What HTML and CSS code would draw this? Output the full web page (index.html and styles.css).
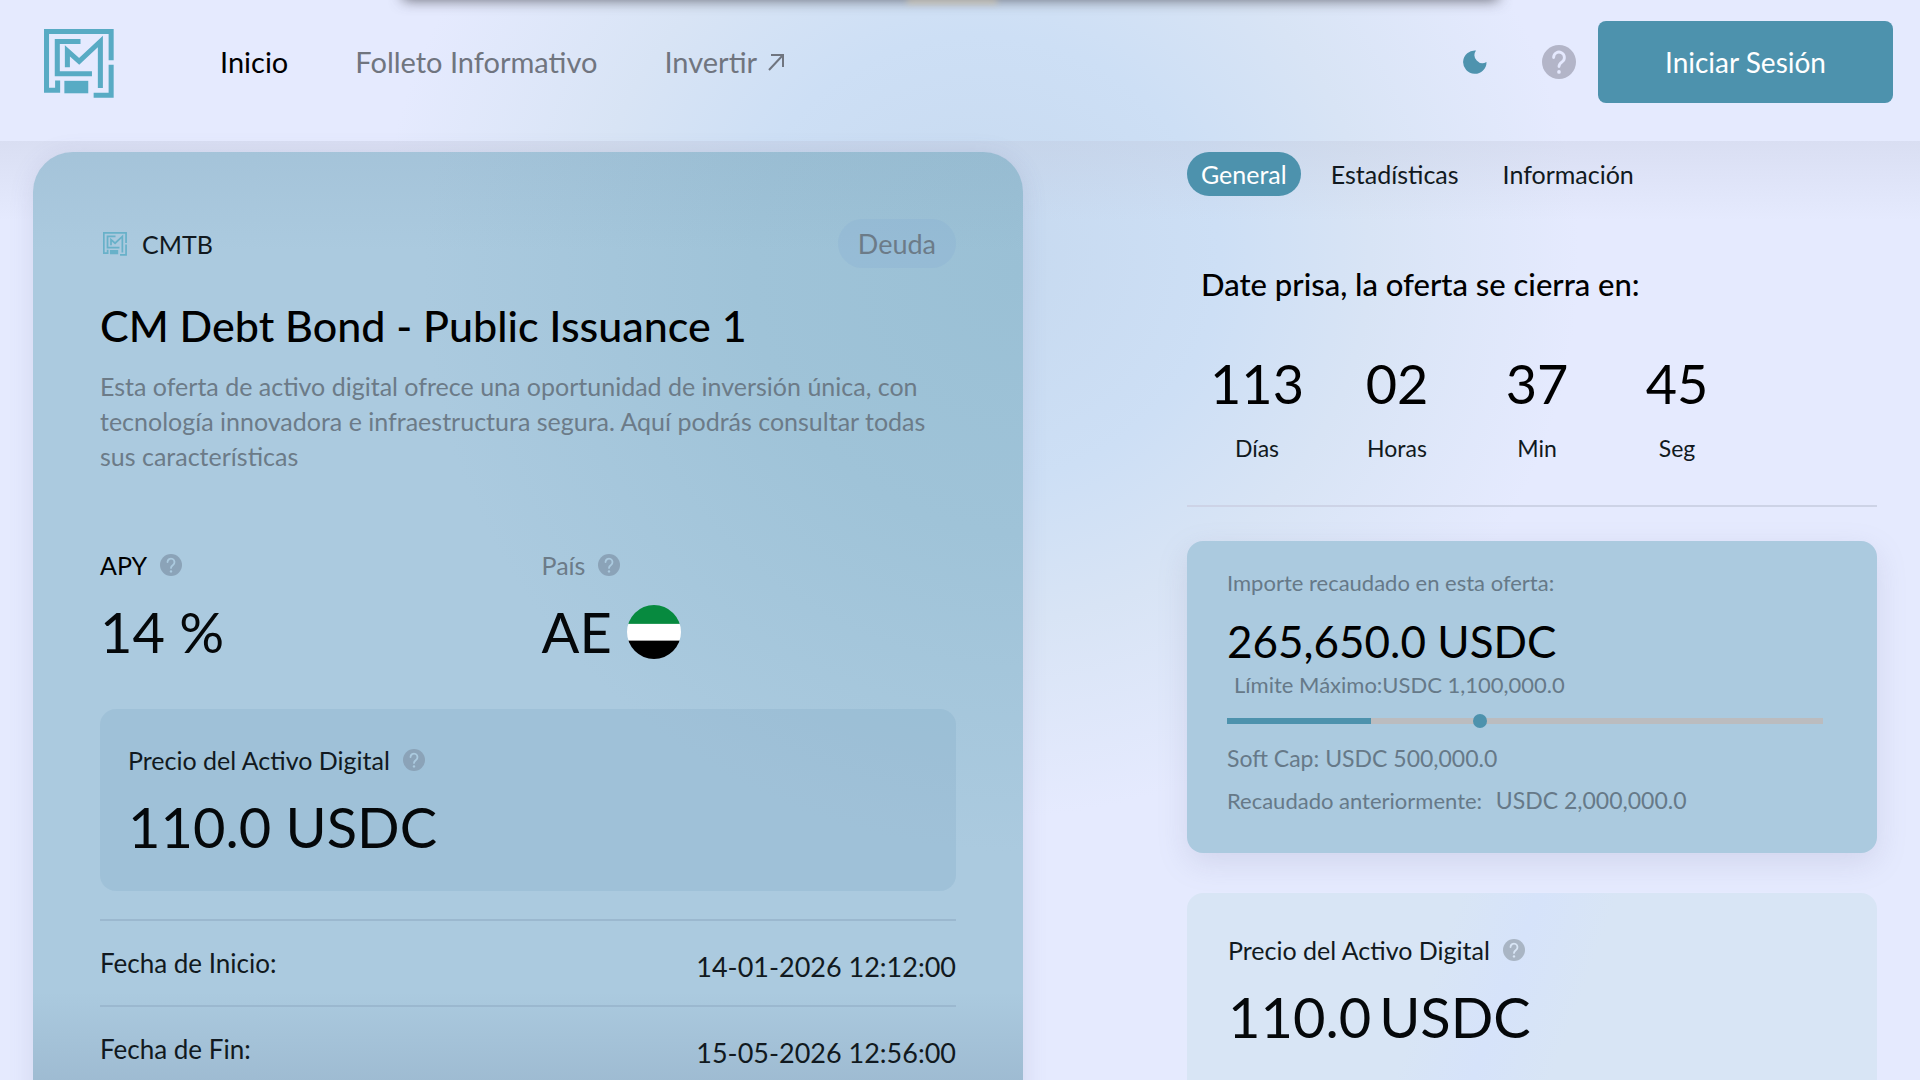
FILE: index.html
```html
<!DOCTYPE html>
<html lang="es">
<head>
  <meta charset="UTF-8" />
  <meta name="viewport" content="width=device-width, initial-scale=1.0"/>
  <title>CM Debt Bond - Public Issuance 1</title>
  <link rel="stylesheet" href="styles.css">
</head>
<body>

  <!-- Iconos compartidos -->
  <svg class="sprite" aria-hidden="true">
    <symbol id="logo" viewBox="44 43 207 205">
      <g fill="none" stroke="currentColor" stroke-width="15">
        <path d="M243 136V50H51v175h33v-29"/>
        <path d="M152 80H83v96h103"/>
        <path d="M113 157v-49l35 31 63-59v138"/>
        <path d="M243 149v91h-52"/>
      </g>
      <path fill="currentColor" d="M104 197h71v37h-71z"/>
    </symbol>
    <symbol id="help" viewBox="0 0 24 24">
      <circle cx="12" cy="12" r="12" fill="currentColor"/>
      <path class="help-mark" d="M8.200 8.800a3.800 3.800 0 1 1 6 3.100c-1.400 1-2.200 1.600-2.200 3.300"/>
      <circle class="help-dot" cx="12" cy="19" r="1.300"/>
    </symbol>
  </svg>

  <div class="top-shadow"></div>

  <header class="navbar">
    <a class="logo" href="#" aria-label="CM"><svg><use href="#logo"/></svg></a>
    <nav class="menu">
      <a href="#" class="active">Inicio</a>
      <a href="#">Folleto Informativo</a>
      <a href="#">Invertir
        <svg class="arrow" viewBox="0 0 18 18"><path d="M2 17 16 2M4 2h12v12"/></svg>
      </a>
    </nav>
    <div class="actions">
      <button class="icon-btn moon" type="button" aria-label="Modo oscuro">
        <svg viewBox="0 0 24 24"><path d="M13 .5A8 8 0 0 0 23.500 12 11.700 11.700 0 1 1 13 .5z"/></svg>
      </button>
      <button class="icon-btn help-btn" type="button" aria-label="Ayuda"><svg><use href="#help"/></svg></button>
      <button class="login" type="button">Iniciar Sesión</button>
    </div>
  </header>

  <main class="layout">

    <section class="offer">
      <div class="offer-top">
        <span class="ticker"><svg><use href="#logo"/></svg>CMTB</span>
        <span class="badge">Deuda</span>
      </div>
      <h1>CM Debt Bond - Public Issuance 1</h1>
      <p class="description">Esta oferta de activo digital ofrece una oportunidad de inversión única, con tecnología innovadora e infraestructura segura. Aquí podrás consultar todas sus características</p>

      <div class="facts">
        <div>
          <p class="label strong">APY <svg class="help"><use href="#help"/></svg></p>
          <p class="value">14 %</p>
        </div>
        <div>
          <p class="label muted">País <svg class="help"><use href="#help"/></svg></p>
          <p class="value">AE <span class="flag"></span></p>
        </div>
      </div>

      <div class="price-box">
        <p class="label">Precio del Activo Digital <svg class="help"><use href="#help"/></svg></p>
        <p class="value">110.0 USDC</p>
      </div>

      <dl class="dates">
        <div><dt>Fecha de Inicio:</dt><dd>14-01-2026 12:12:00</dd></div>
        <div><dt>Fecha de Fin:</dt><dd>15-05-2026 12:56:00</dd></div>
      </dl>
    </section>

    <section class="side">
      <div class="tabs">
        <button type="button" class="selected">General</button>
        <button type="button">Estadísticas</button>
        <button type="button">Información</button>
      </div>

      <h2>Date prisa, la oferta se cierra en:</h2>
      <div class="countdown">
        <div><strong>113</strong><span>Días</span></div>
        <div><strong>02</strong><span>Horas</span></div>
        <div><strong>37</strong><span>Min</span></div>
        <div><strong>45</strong><span>Seg</span></div>
      </div>

      <div class="raised">
        <p>Importe recaudado en esta oferta:</p>
        <p class="raised-amount">265,650.0 USDC</p>
        <p class="hard-cap">Límite Máximo:USDC 1,100,000.0</p>
        <div class="bar">
          <div class="bar-fill" style="width: 24.15%"></div>
          <span class="bar-dot" style="left: 42.5%"></span>
        </div>
        <p class="soft-cap">Soft Cap: USDC 500,000.0</p>
        <p class="previous">Recaudado anteriormente: <b>USDC 2,000,000.0</b></p>
      </div>

      <div class="side-price">
        <p class="label">Precio del Activo Digital <svg class="help"><use href="#help"/></svg></p>
        <p class="value"><span>110.0</span><span>USDC</span></p>
      </div>
    </section>

  </main>

</body>
</html>
```
FILE: styles.css
```css
* { margin: 0; padding: 0; box-sizing: border-box; }

body {
  height: 100vh;
  overflow: hidden;
  font-family: Lato, 'Open Sans', sans-serif;
  font-size: 25px;
  color: #111920;
  background:
    radial-gradient(ellipse 600px 560px at 51% 24%, #c6d9ef 0%, #cddff5 40%, #d8e4f5 65%, rgba(229,234,254,0) 100%),
    #e5eafe;
}

button {
  font: inherit;
  color: inherit;
  border: none;
  background: none;
  cursor: pointer;
}

a { color: inherit; text-decoration: none; }

svg { display: block; }

.sprite { position: absolute; width: 0; height: 0; }

.help-mark {
  fill: none;
  stroke: var(--mark, #abcadf);
  stroke-width: 2;
  stroke-linecap: round;
}

.help-dot { fill: var(--mark, #abcadf); }

/* Sombra de la barra superior */
.top-shadow {
  position: absolute;
  top: -20px;
  left: 21%;
  right: 22%;
  height: 20px;
  box-shadow: 0 0 14px rgba(70,70,80,0.8);
}

.top-shadow::after {
  content: "";
  position: absolute;
  top: 20px;
  left: 46%;
  width: 90px;
  height: 3px;
  background: #e3cfa8;
  filter: blur(3px);
}

/* Navbar */
.navbar {
  display: flex;
  align-items: center;
  height: 141px;
  padding: 0 27px 18px 44px;
}

.logo { padding-top: 4px; color: #58abc4; }
.logo svg { width: 70px; height: 69px; }

.menu {
  display: flex;
  gap: 67px;
  margin-left: 106px;
  font-size: 29px;
  color: #70757f;
}

.menu a { display: flex; align-items: center; gap: 10px; }
.menu .active { color: #000; }

.arrow {
  width: 18px;
  height: 18px;
  fill: none;
  stroke: currentColor;
  stroke-width: 2;
}

.actions {
  display: flex;
  align-items: center;
  margin-left: auto;
}

.moon svg { width: 24px; height: 24px; fill: #4e93ae; }

.help-btn {
  margin: 0 22px 0 55px;
  color: #b3b5c8;
  --mark: #e5e9fe;
}

.help-btn svg { width: 34px; height: 34px; }

.login {
  width: 295px;
  height: 82px;
  border-radius: 8px;
  background: #4d92ad;
  color: #fff;
  font-size: 28px;
}

/* Contenido */
.layout {
  display: grid;
  grid-template-columns: 990fr 690fr;
  gap: 164px;
  padding: 11px 43px 0 33px;
  background: linear-gradient(rgba(190,195,215,0.3), rgba(190,195,215,0) 80px);
}

.offer {
  padding: 67px;
  border-radius: 40px;
  background:
    linear-gradient(rgba(100,120,150,0) 840px, rgba(100,120,150,0.18) 930px),
    linear-gradient(rgba(90,120,150,0.08), rgba(90,120,150,0) 100px),
    radial-gradient(ellipse 600px 580px at 100% 12%, #9ac0d5 0%, #9fc3d8 45%, rgba(171,202,223,0) 100%),
    #abcadf;
  box-shadow: 0 4px 24px rgba(100,100,150,0.15);
}

.offer-top {
  display: flex;
  justify-content: space-between;
  align-items: center;
}

.ticker {
  display: flex;
  align-items: center;
  gap: 15px;
  padding-left: 3px;
}

.ticker svg { width: 24px; height: 24px; color: #68b1c9; }

.badge {
  padding: 0 20px;
  border-radius: 25px;
  background: rgba(130,170,210,0.25);
  color: #6c7b88;
  font-size: 27px;
  line-height: 49px;
}

h1 {
  margin-top: 30px;
  color: #000;
  font-size: 43px;
  font-weight: 500;
  line-height: 56px;
}

.description {
  margin-top: 15px;
  color: #6c7b88;
  line-height: 35px;
}

.facts {
  display: grid;
  grid-template-columns: 441fr 414fr;
  margin-top: 75px;
}

.label {
  display: flex;
  align-items: center;
  gap: 13px;
  line-height: 32px;
}

.strong { color: #000; }
.muted { color: #6c7b88; }

.help { width: 22px; height: 22px; color: #8ba3b8; }

.value {
  display: flex;
  align-items: center;
  gap: 15px;
  margin-top: 16px;
  color: #05080a;
  font-size: 56px;
  line-height: 70px;
}

.flag {
  width: 54px;
  height: 54px;
  border-radius: 50%;
  background: linear-gradient(#078a3f 34%, #fff 36% 65%, #000 67%);
}

.price-box {
  margin-top: 42px;
  padding: 35px 28px 29px;
  border-radius: 16px;
  background: rgba(90,145,180,0.14);
}

.dates { margin-top: 28px; }

.dates div {
  display: flex;
  justify-content: space-between;
  align-items: center;
  height: 86px;
  border-top: 2px solid #9bb8cf;
}

.dates dt { font-size: 26px; }
.dates dd { padding-top: 6px; font-size: 27px; }

/* Columna derecha */
.tabs { display: flex; gap: 16px; }

.tabs button {
  padding: 0 14px;
  border-radius: 22px;
  line-height: 44px;
}

.tabs .selected {
  background: #4d92ad;
  color: #fff;
}

h2 {
  margin: 70px 0 0 14px;
  color: #000;
  font-size: 31px;
  font-weight: 500;
  line-height: 36px;
}

.countdown {
  display: flex;
  padding-bottom: 41px;
  border-bottom: 2px solid #cdd3e6;
}

.countdown div {
  width: 140px;
  margin-top: 47px;
  text-align: center;
}

.countdown strong {
  display: block;
  color: #000;
  font-size: 54px;
  font-weight: 400;
  line-height: 70px;
}

.countdown span {
  display: block;
  margin-top: 13px;
  font-size: 23px;
  line-height: 32px;
}

.raised {
  margin-top: 34px;
  padding: 26px 54px 36px 40px;
  border-radius: 16px;
  background: #abcadf;
  color: #667988;
  font-size: 22px;
  line-height: 32px;
  box-shadow: 0 10px 30px rgba(120,120,160,0.18);
}

.raised-amount {
  margin: 14px 0 0;
  color: #000;
  font-size: 44px;
  line-height: 56px;
}

.hard-cap { padding-left: 7px; }

.bar {
  position: relative;
  height: 6px;
  margin: 17px 0 18px;
  background: #bbbcbf;
}

.bar-fill { height: 100%; background: #4d92ad; }

.bar-dot {
  position: absolute;
  top: -4px;
  width: 14px;
  height: 14px;
  margin-left: -7px;
  border-radius: 50%;
  background: #4d92ad;
}

.soft-cap { font-size: 23px; }
.previous { margin-top: 10px; }
.previous b { margin-left: 8px; font-size: 23px; font-weight: 400; }

.side-price {
  height: 260px;
  margin-top: 40px;
  padding: 41px;
  border-radius: 16px;
  background: linear-gradient(110deg, #d8e5f5 35%, #d6e3fa 45%, #d8e5f5 55%);
  --mark: #d8e5f5;
}

.side-price .help { color: #a9b5c4; }
.side-price .value { gap: 8px; }
```
